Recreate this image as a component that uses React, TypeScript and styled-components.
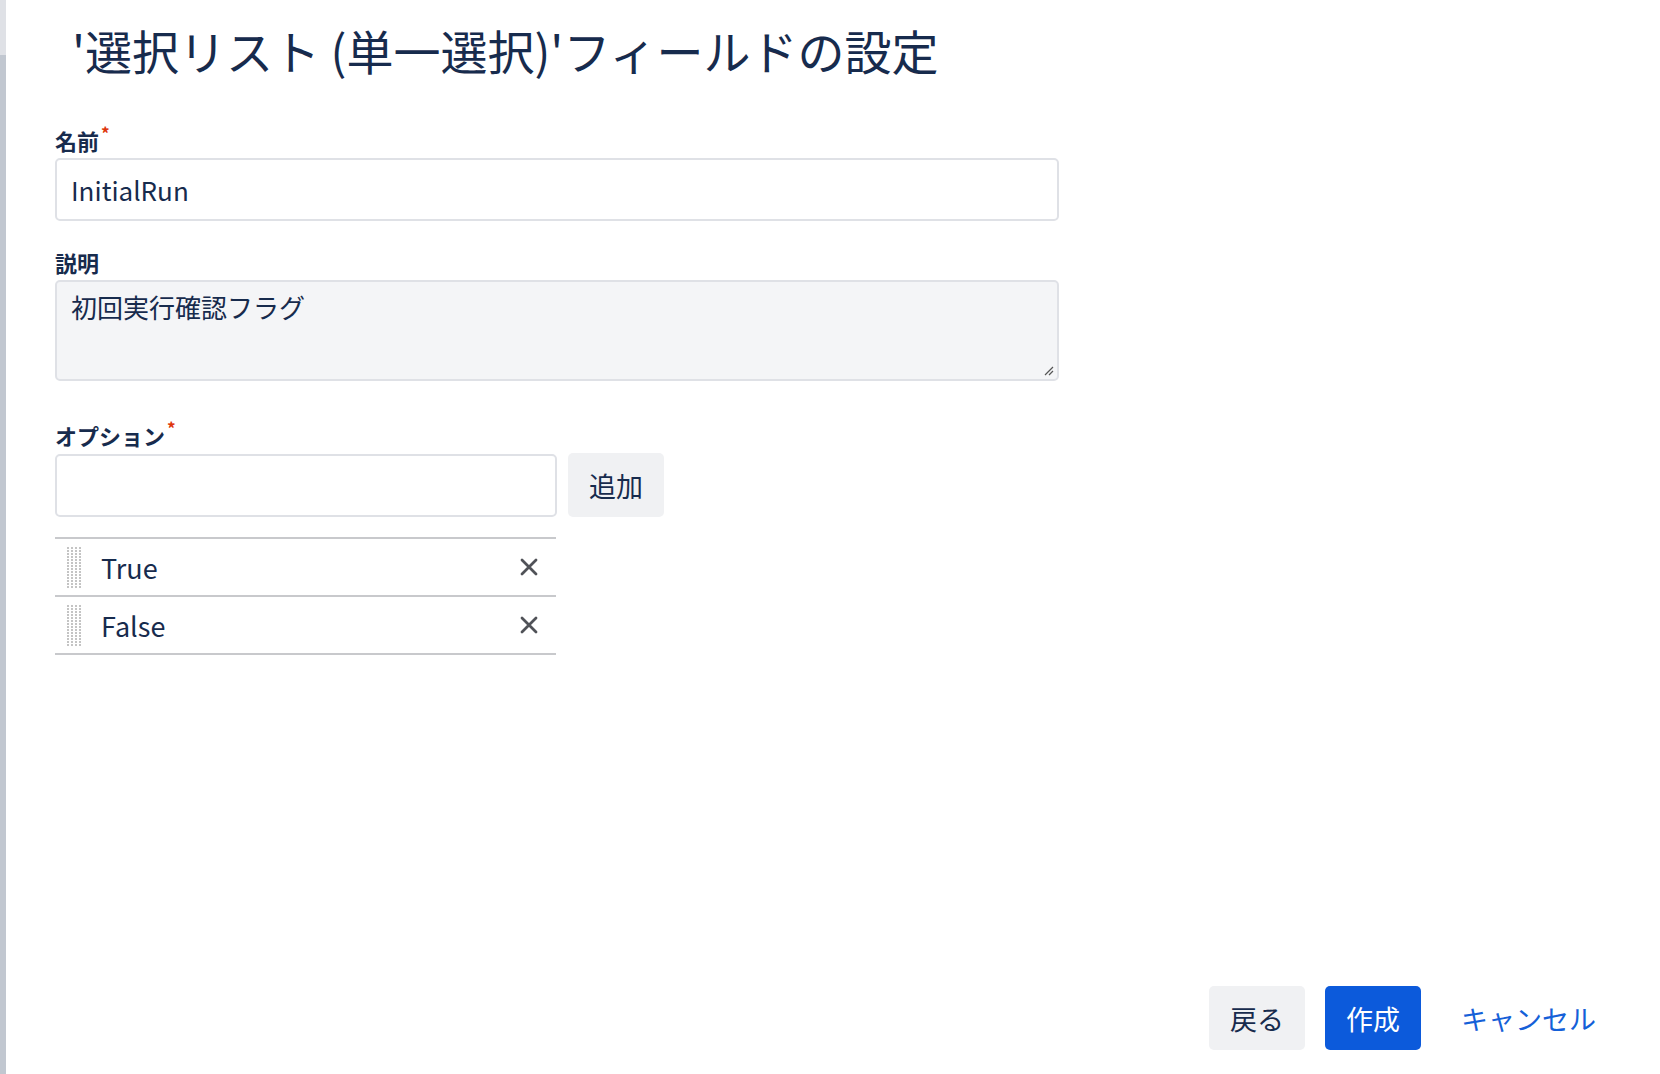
import React from "react";
import styled, { createGlobalStyle } from "styled-components";

const G = createGlobalStyle`
  html, body { margin: 0; padding: 0; background: #fff; }
  body { font-family: "Noto Sans CJK JP", "Noto Sans", sans-serif; color: #172b4d; }
`;

const Page = styled.div`
  display: flex;
  width: 1660px;
  height: 1074px;
  overflow: hidden;
`;
const Strip = styled.div`
  width: 6px;
  flex: none;
  background: #c1c7d0;
  border-top: 55px solid #dfe1e6;
`;
const Dialog = styled.div`
  flex: 1;
  display: flex;
  flex-direction: column;
  padding: 18px 44px 24px 49px;
`;
const Title = styled.h1`
  margin: 0 0 0 17px;
  font-size: 47px;
  font-weight: 400;
  line-height: 64px;
  color: #172b4d;
`;
const Label = styled.div<{ $top: number }>`
  margin-top: ${(p) => p.$top}px;
  margin-bottom: 4px;
  font-size: 22px;
  font-weight: 700;
  line-height: 28px;
  display: flex;
  align-items: flex-start;
`;
const Star = styled.span`
  color: #de350b;
  font-size: 17px;
  line-height: 14px;
  margin-left: 2px;
`;
const Input = styled.div<{ $w: number }>`
  box-sizing: border-box;
  width: ${(p) => p.$w}px;
  height: 63px;
  border: 2px solid #dfe1e6;
  border-radius: 5px;
  padding: 0 14px;
  display: flex;
  align-items: center;
  font-size: 26px;
  background: #fff;
`;
const Area = styled.div`
  box-sizing: border-box;
  width: 1004px;
  height: 101px;
  border: 2px solid #dfe1e6;
  border-radius: 5px;
  padding: 6px 14px;
  font-size: 26px;
  background: #f4f5f7;
  position: relative;
`;
const Grip = styled.svg`
  position: absolute;
  right: 3px;
  bottom: 3px;
`;
const Row = styled.div`
  display: flex;
  gap: 11px;
  align-items: center;
`;
const Btn = styled.button<{ $primary?: boolean }>`
  font-family: inherit;
  border: none;
  border-radius: 5px;
  height: 64px;
  padding: 0 21px;
  font-size: 27px;
  background: ${(p) => (p.$primary ? "#0c5adb" : "#f0f1f3")};
  color: ${(p) => (p.$primary ? "#fff" : "#172b4d")};
`;
const LinkBtn = styled.button`
  font-family: inherit;
  border: none;
  background: none;
  color: #1460d8;
  font-size: 27px;
  padding: 0 20px;
  height: 64px;
`;
const List = styled.div`
  width: 501px;
  margin-top: 20px;
  border-top: 2px solid #c8c9cc;
`;
const Item = styled.div`
  display: flex;
  align-items: center;
  height: 56px;
  border-bottom: 2px solid #c8c9cc;
  font-size: 27px;
  padding: 0 18px 0 10px;
`;
const ItemText = styled.span`
  flex: 1;
  margin-left: 18px;
`;
const Footer = styled.div`
  margin-top: auto;
  display: flex;
  justify-content: flex-end;
  gap: 20px;
`;

const Dots = () => (
  <svg width="18" height="42" viewBox="0 0 18 42">
    {Array.from({ length: 14 }).map((_, r) =>
      [2, 6, 10, 14].map((x) => <rect key={r + "-" + x} x={x} y={r * 3 + 1} width="2" height="2" fill="#c4c4c4" />)
    )}
  </svg>
);
const X = () => (
  <svg width="18" height="18" viewBox="0 0 18 18">
    <path d="M2 2L16 16M16 2L2 16" stroke="#505258" strokeWidth="2.8" strokeLinecap="round" />
  </svg>
);

export default function App() {
  return (
    <Page>
      <G />
      <Strip />
      <Dialog>
        <Title>'選択リスト (単一選択)'フィールドの設定</Title>
        <Label $top={44}>名前<Star>*</Star></Label>
        <Input $w={1004}>InitialRun</Input>
        <Label $top={27}>説明</Label>
        <Area>
          初回実行確認フラグ
          <Grip width="12" height="12" viewBox="0 0 12 12">
            <path d="M11 3L3 11M11 7L7 11" stroke="#555" strokeWidth="1.2" />
          </Grip>
        </Area>
        <Label $top={40}>オプション<Star>*</Star></Label>
        <Row>
          <Input $w={502} />
          <Btn>追加</Btn>
        </Row>
        <List>
          {["True", "False"].map((t) => (
            <Item key={t}>
              <Dots />
              <ItemText>{t}</ItemText>
              <X />
            </Item>
          ))}
        </List>
        <Footer>
          <Btn>戻る</Btn>
          <Btn $primary>作成</Btn>
          <LinkBtn>キャンセル</LinkBtn>
        </Footer>
      </Dialog>
    </Page>
  );
}
